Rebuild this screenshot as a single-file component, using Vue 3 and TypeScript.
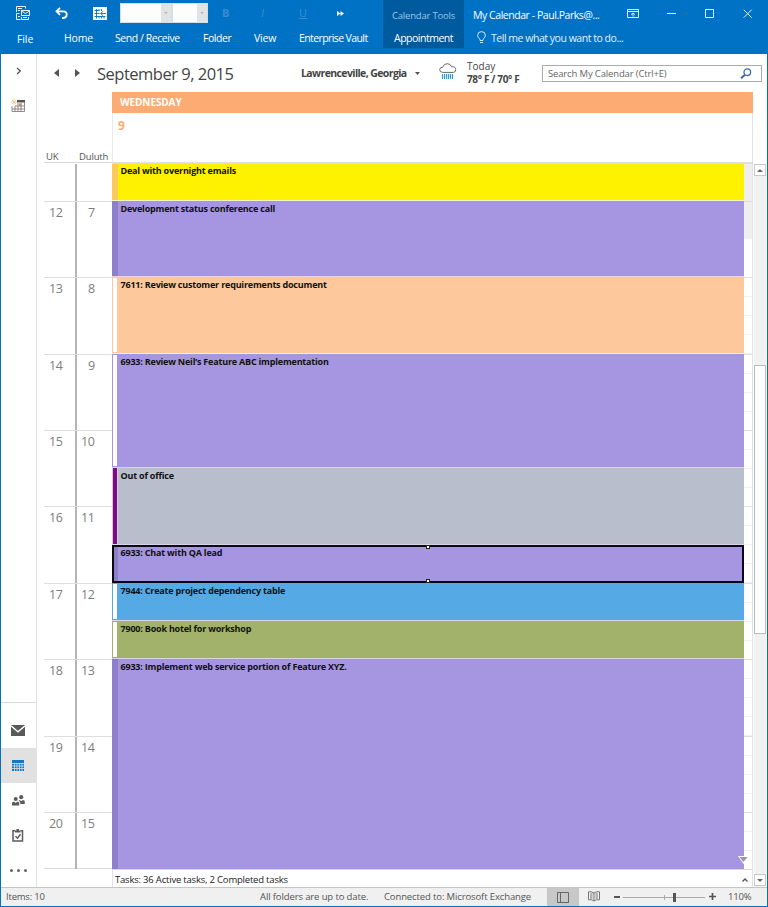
<script setup lang="ts">
interface CalendarEvent {
  title: string
  kind: string
  bar: 'busy' | 'free' | 'away'
  height: number
  selected?: boolean
}

interface HourRow {
  uk: string
  duluth: string
  height: number
}

const tabs = [
  { label: 'File', cls: 'file' },
  { label: 'Home', cls: 'home' },
  { label: 'Send / Receive', cls: 'send' },
  { label: 'Folder', cls: 'folder' },
  { label: 'View', cls: 'view' },
  { label: 'Enterprise Vault', cls: 'vault' },
]

const hours: HourRow[] = [
  { uk: '', duluth: '', height: 38 },
  { uk: '12', duluth: '7', height: 76 },
  { uk: '13', duluth: '8', height: 77 },
  { uk: '14', duluth: '9', height: 76 },
  { uk: '15', duluth: '10', height: 76 },
  { uk: '16', duluth: '11', height: 77 },
  { uk: '17', duluth: '12', height: 76 },
  { uk: '18', duluth: '13', height: 77 },
  { uk: '19', duluth: '14', height: 76 },
  { uk: '20', duluth: '15', height: 56 },
]

const events: CalendarEvent[] = [
  { title: 'Deal with overnight emails', kind: 'yellow', bar: 'busy', height: 37 },
  { title: 'Development status conference call', kind: 'purple', bar: 'busy', height: 76 },
  { title: '7611: Review customer requirements document', kind: 'orange', bar: 'free', height: 77 },
  { title: '6933: Review Neil’s Feature ABC implementation', kind: 'purple', bar: 'free', height: 114 },
  { title: 'Out of office', kind: 'gray', bar: 'away', height: 77 },
  { title: '6933: Chat with QA lead', kind: 'purple', bar: 'busy', height: 38, selected: true },
  { title: '7944: Create project dependency table', kind: 'blue', bar: 'free', height: 38 },
  { title: '7900: Book hotel for workshop', kind: 'olive', bar: 'free', height: 38 },
  { title: '6933: Implement web service portion of Feature XYZ.', kind: 'purple', bar: 'busy', height: 210 },
]
</script>

<template>
  <div class="window">
    <header class="ribbon">
      <div class="left">
        <div class="quick">
          <svg class="q1" width="16" height="16" viewBox="0 0 16 16" fill="none" stroke="#fff" stroke-width=".9">
            <path d="M1.500 7V1.500h9v2M3 3.500h4M3 5.500h2M6.500 5.500h8v5h-8zM6.500 6l4 2.500 4-2.500M1.500 8.500h3M1.500 8.500v6h4M3 11.500h2M6.500 12v2.500h7V12M8 12.500h4" />
          </svg>
          <svg class="q2" width="14" height="13" viewBox="0 0 14 13" fill="none" stroke="#fff" stroke-width="1.8">
            <path d="M5 .8 1.500 4.300 5 7.800M2 4.300h6q3.700 0 3.700 3.200T8.500 11H7" />
          </svg>
          <svg class="q3" width="14" height="13" viewBox="0 0 14 13">
            <path d="M0 0h14v13H0z" fill="#fff" />
            <path d="M1.500 3.500h5M1.500 6.500h5M1.500 9.500h11M3.500 2v9.500M6 2v2M8.500 2v2M6 9v2.500M8.500 9v2.500M11 9v2.500M7.500 6.500H13M10 4.200 7.700 6.500 10 8.800" fill="none" stroke="#0072c6" stroke-width=".9" />
          </svg>
          <span class="combo wide"><i><b></b></i></span>
          <span class="combo"><i><b></b></i></span>
          <span class="fmt fb">B</span>
          <span class="fmt fi">I</span>
          <span class="fmt fu">U</span>
          <svg class="more" width="7" height="5" viewBox="0 0 7 5" fill="#fff"><path d="M0 0l3.500 2.500L0 5zM3.500 0L7 2.500 3.500 5z" /></svg>
        </div>
        <nav class="tabs">
          <span v-for="tab in tabs" :key="tab.cls" class="tab" :class="tab.cls">{{ tab.label }}</span>
        </nav>
      </div>
      <div class="context">
        <span class="tools">Calendar Tools</span>
        <span class="appt">Appointment</span>
      </div>
      <div class="right">
        <div class="caption">
          <span class="wtitle">My Calendar - Paul.Parks@...</span>
          <svg class="w1" width="12" height="9" viewBox="0 0 12 9" fill="none" stroke="#e4f0fa">
            <path d="M.5.5h11v8H.5zM1 2.500h10M6 7.500V4M4 5.700l2-1.700 2 1.700" />
          </svg>
          <svg class="w2" width="10" height="10" viewBox="0 0 10 10" stroke="#e4f0fa"><path d="M0 5.500h9" /></svg>
          <svg class="w3" width="10" height="10" viewBox="0 0 10 10" fill="none" stroke="#e4f0fa"><path d="M.5.5h8v8h-8z" /></svg>
          <svg class="w4" width="10" height="10" viewBox="0 0 10 10" stroke="#e4f0fa"><path d="M.7.7l8 8M8.700.7l-8 8" /></svg>
        </div>
        <div class="tell">
          <svg width="9" height="13" viewBox="0 0 9 13" fill="none" stroke="#d4e7f6">
            <path d="M3 9.500V8.200Q.6 6.700.6 4.300.6.6 4.500.6t3.900 3.700Q8.400 6.700 6 8.200v1.300zM3 11.500h3" />
          </svg>
          <span>Tell me what you want to do...</span>
        </div>
      </div>
    </header>

    <div class="body">
      <aside class="rail">
        <svg class="expand" width="6" height="8" viewBox="0 0 6 8" fill="none" stroke="#555" stroke-width="1.3"><path d="M1 1l3.300 3L1 7" /></svg>
        <svg class="peek" width="14" height="14" viewBox="0 0 14 14">
          <path d="M6 1h8v2.500H6z" fill="#5d5350" />
          <path d="M1 7v5.500h12.500V3M1 10h12M4 7v5M7 4v8M10 4v8M4 7h9" fill="none" stroke="#77706c" stroke-width=".8" />
          <path d="M3 0v6M0 3h6M1 1l4 4M5 1L1 5" stroke="#e9c88b" stroke-width=".8" />
          <path d="M8 4.500h2.500V7H8z" fill="#c98a6e" />
        </svg>
        <div class="modules">
          <div class="mod">
            <svg width="14" height="11" viewBox="0 0 14 11"><path d="M0 0h14v11H0z" fill="#595959" /><path d="M0 .8l7 6 7-6" fill="none" stroke="#fff" stroke-width="1.300" /></svg>
          </div>
          <div class="mod active">
            <svg width="12" height="11" viewBox="0 0 12 11">
              <path d="M0 0h12v11H0z" fill="#1577c2" />
              <path d="M0 3.500h12M0 6h12M0 8.500h12M2.500 3v8M5 3v8M7.500 3v8M10 3v8" stroke="#e1e1e1" stroke-width=".8" />
            </svg>
          </div>
          <div class="mod">
            <svg width="13" height="11" viewBox="0 0 13 11" fill="#5b5b5b">
              <circle cx="3.700" cy="3.900" r="2" /><circle cx="9.200" cy="2.200" r="2.100" />
              <path d="M0 7.500l2-1 1.700 1.400 1.700-1.400 1.800 1V10.500H0zM6.500 5.800l1.200-.8 1.500 1.300L10.700 5l2 .8V9H8.200V7z" />
            </svg>
          </div>
          <div class="mod">
            <svg width="12" height="13" viewBox="0 0 12 13" fill="none" stroke="#5b5b5b" stroke-width="1.500">
              <path d="M3 1.800H1v10.200h9.500V1.800H8.500M3.500 7.200l2 2 3-4" /><path d="M3 2.500h5.500M4.500 1H7" stroke-width="2" />
            </svg>
          </div>
          <div class="mod dots"><i></i><i></i><i></i></div>
        </div>
      </aside>

      <main class="main">
        <div class="toolbar">
          <svg class="prev" width="5" height="8" viewBox="0 0 5 8" fill="#555"><path d="M5 0v8L0 4z" /></svg>
          <svg class="next" width="5" height="8" viewBox="0 0 5 8" fill="#555"><path d="M0 0v8l5-4z" /></svg>
          <h1>September 9, 2015</h1>
          <span class="place">Lawrenceville, Georgia</span>
          <svg class="drop" width="5" height="3" viewBox="0 0 5 3" fill="#555"><path d="M0 0h5L2.500 3z" /></svg>
          <svg class="weather" width="18" height="17" viewBox="0 0 18 17" fill="none">
            <path d="M3.700 9.400Q.7 9.200.7 6.700q0-2.400 3-2.500Q4.800.7 8.300.7q3.200 0 4.200 3 4.200-.3 4.200 3 0 2.500-2.200 2.700z" stroke="#666" />
            <path d="M3.500 11v5M5.500 11v5M7.500 11v5M9.500 11v5M11.500 11v5M13.500 11v5" stroke="#28a3dc" stroke-width="1.200" />
          </svg>
          <div class="forecast"><span class="today">Today</span><span class="temp">78° F / 70° F</span></div>
          <div class="search">
            <span>Search My Calendar (Ctrl+E)</span>
            <svg width="12" height="11" viewBox="0 0 12 11" fill="none" stroke="#3d68b0"><circle cx="7.300" cy="4.200" r="3.300" stroke-width="1.300" /><path d="M5 6.700L1 10.200" stroke-width="2" /></svg>
          </div>
        </div>

        <div class="sheet">
          <div class="heads">
            <div class="zones"><span class="uk">UK</span><span class="dul">Duluth</span></div>
            <div class="day">
              <div class="dayname">WEDNESDAY</div>
              <div class="allday">9</div>
            </div>
          </div>
          <div class="grid">
            <div class="hours">
              <div v-for="(row, i) in hours" :key="i" class="hour" :style="{ height: row.height + 'px' }">
                <span class="h1">{{ row.uk }}</span><span class="h2">{{ row.duluth }}</span>
              </div>
            </div>
            <div class="events">
              <div
                v-for="(event, i) in events"
                :key="i"
                class="event"
                :class="[event.kind, { selected: event.selected }]"
                :style="{ height: event.height + 'px' }"
              >
                <i class="bar" :class="event.bar"></i>
                <span>{{ event.title }}</span>
                <template v-if="event.selected"><b class="grip top"></b><b class="grip bottom"></b></template>
              </div>
            </div>
            <div class="slots">
              <div v-for="(row, i) in hours" :key="i" class="slot" :class="{ off: i === 0, half: i === 1 }" :style="{ height: row.height + 'px' }"></div>
              <svg class="below" width="11" height="8" viewBox="0 0 11 8"><path d="M0 0h11L5.500 8z" fill="#fff" /><path d="M1.500 1h8L5.500 6z" fill="#9a9a9a" /></svg>
            </div>
            <div class="scroll">
              <div class="sbtn"><i class="up"></i></div>
              <div class="thumb"></div>
              <div class="sbtn end"><i class="down"></i></div>
            </div>
          </div>
          <div class="tasks">
            <span>Tasks: 36 Active tasks, 2 Completed tasks</span>
            <svg width="6" height="4" viewBox="0 0 6 4" fill="none" stroke="#555" stroke-width="1.400"><path d="M.5 3.500L3 1l2.500 2.500" /></svg>
          </div>
        </div>
      </main>
    </div>

    <footer class="status">
      <span class="items">Items: 10</span>
      <span class="sync">All folders are up to date.</span>
      <span class="conn">Connected to: Microsoft Exchange</span>
      <span class="viewbtn"><svg width="12" height="11" viewBox="0 0 12 11" fill="none" stroke="#666"><path d="M.5.5h11v10H.5zM3.500.5v10" /></svg></span>
      <svg class="book" width="12" height="11" viewBox="0 0 12 11" fill="none" stroke="#777"><path d="M6 2Q3 0 .5.800v8Q3.500 8 6 10 8.500 8 11.500 8.800v-8Q9 0 6 2v8M2 3h2.500M2 5h2.500M2 7h2.500M7.500 3H10M7.500 5H10M7.500 7H10" /></svg>
      <i class="minus"></i>
      <span class="slider"><i class="mid"></i><i class="knob"></i></span>
      <svg class="plus" width="7" height="7" viewBox="0 0 7 7" stroke="#555" stroke-width="1.700"><path d="M0 3.500h7M3.500 0v7" /></svg>
      <span class="zoom">110%</span>
    </footer>
  </div>
</template>

<style>
body { background: #fff; }
</style>

<style scoped>
* { box-sizing: border-box; }
.window {
  width: 768px; height: 907px; overflow: hidden; display: flex; flex-direction: column;
  font-family: "Open Sans", "Noto Sans", sans-serif; font-size: 10px; color: #444; white-space: nowrap;
  border: 1px solid #0072c6; border-top: 0; background: #fff;
}
svg { display: block; flex: none; }
i, b { display: block; }
.ribbon { height: 54px; flex: none; display: flex; background: #0072c6; color: #fff; }
.left { width: 382px; }
.quick { height: 28px; display: flex; align-items: flex-start; }
.q1 { margin: 5px 0 0 14px; }
.q2 { margin: 7px 0 0 24px; }
.q3 { margin: 7px 0 0 24px; }
.combo { width: 36px; height: 20px; margin: 3px 0 0 0; background: #fdfdfd; border: 1px solid #d5dde5; display: flex; justify-content: flex-end; flex: none; }
.combo.wide { width: 52px; margin-left: 13px; }
.combo i { width: 10px; background: #e3e3e3; }
.combo b { margin: 8px auto 0; width: 4px; border: 2px solid transparent; border-top-color: #b5b5b5; }
.fmt { font-size: 11px; line-height: 14px; margin-top: 6px; color: #3a8dd2; }
.fb { margin-left: 14px; font-weight: 700; width: 39px; }
.fi { font-style: italic; width: 38px; }
.fu { text-decoration: underline; width: 37px; }
.more { margin: 11px 0 0 1px; }
.tabs { display: flex; }
.tab { font-size: 10.500px; line-height: 16px; margin-top: 2px; letter-spacing: -.2px; }
.tab.file { box-sizing: content-box; width: 47px; padding-left: 16px; margin-top: 3px; letter-spacing: -.1px; }
.home { width: 51px; }
.send { width: 88px; }
.tab.send { letter-spacing: -.45px; }
.folder { width: 51px; }
.tab.folder { letter-spacing: -.45px; }
.view { width: 45px; }
.tab.vault { letter-spacing: -.6px; }
.context { width: 81px; height: 48px; background: #005a9e; display: flex; flex-direction: column; align-items: center; }
.tools { font-size: 9.500px; line-height: 16px; margin-top: 8px; color: #9dc6e8; letter-spacing: -.2px; }
.appt { font-size: 10.500px; line-height: 16px; margin-top: 6px; letter-spacing: -.5px; }
.right { flex: 1; }
.caption { height: 28px; display: flex; }
.wtitle { font-size: 10.500px; line-height: 16px; margin: 7px 0 0 9px; width: 155px; letter-spacing: -.45px; }
.w1 { margin: 9px 0 0 -1px; }
.w2 { margin: 8px 0 0 28px; }
.w3 { margin: 9px 0 0 28px; }
.w4 { margin: 9px 0 0 28px; }
.tell { display: flex; font-size: 10.500px; line-height: 16px; margin-left: 13px; gap: 5px; color: #e4f0fa; letter-spacing: -.47px; }
.tell svg { margin-top: 3px; }
.tell span { margin-top: 2px; }

.body { flex: 1; display: flex; min-height: 0; }
.rail { width: 36px; border-right: 1px solid #e1e1e1; display: flex; flex-direction: column; }
.expand { margin: 13px 0 0 15px; }
.peek { margin: 24px 0 0 10px; }
.modules { margin-top: auto; height: 185px; border-top: 1px solid #d9d9d9; padding-top: 10px; }
.mod { height: 35px; display: flex; align-items: center; justify-content: center; padding-right: 1px; }
.mod.active { background: #e1e1e1; }
.dots { gap: 4px; }
.dots i { width: 3px; height: 3px; border-radius: 50%; background: #666; }

.main { flex: 1; display: flex; flex-direction: column; }
.toolbar { height: 38px; display: flex; }
.prev { margin: 15px 0 0 17px; }
.next { margin: 15px 0 0 16px; }
h1 { font-size: 16.500px; line-height: 24px; font-weight: 400; margin: 8px 0 0 17px; width: 204px; letter-spacing: -.5px; }
.place { font-size: 10.500px; font-weight: 700; line-height: 16px; margin-top: 11px; width: 114px; letter-spacing: -.6px; }
.drop { margin-top: 18px; }
.weather { margin: 9px 0 0 19px; }
.forecast { display: flex; flex-direction: column; margin: 6px 0 0 10px; width: 75px; line-height: 13px; font-size: 10px; }
.temp { font-weight: 700; letter-spacing: -.35px; }
.search { width: 220px; height: 17px; margin-top: 11px; border: 1px solid #ababab; display: flex; justify-content: space-between; padding: 0 9px 0 5px; font-size: 9.500px; line-height: 16px; color: #666; letter-spacing: -.15px; }
.search svg { margin-top: 2px; }

.sheet { flex: 1; display: flex; flex-direction: column; padding-left: 7px; }
.heads { height: 72px; display: flex; flex: none; }
.zones { width: 68px; display: flex; align-items: flex-end; font-size: 9.500px; line-height: 11px; color: #555; border-bottom: 1px solid #d8d8d8; margin-bottom: 1px; letter-spacing: -.15px; }
.uk { width: 33px; padding-left: 2px; }
.dul { padding-left: 2px; }
.day { width: 641px; border: 1px solid #e1e1e1; border-top: 0; border-bottom: 2px solid #dedede; border-left-color: #eaeaea; }
.dayname { height: 21px; margin: 0 -1px; background: #fcab73; color: #fff; font-size: 10px; font-weight: 700; line-height: 21px; padding-left: 8px; letter-spacing: -.1px; }
.allday { color: #fcab73; font-weight: 700; font-size: 12px; line-height: 16px; padding: 5px 0 0 5px; }
.grid { height: 705px; display: flex; flex: none; }
.hours { width: 68px; border-bottom: 1px solid #d8d8d8; }
.hour { display: flex; border-bottom: 1px solid #dedede; font-size: 12.500px; line-height: 18px; color: #7d7d7d; letter-spacing: -.3px; }
.hour:last-child { border-bottom: 0; }
.h1 { width: 33px; border-right: 2px solid #b5b5b5; padding: 2px 0 0 5px; }
.h2 { padding: 2px 0 0 4px; }
.hour:nth-child(-n+4) .h2 { padding-left: 11px; }
.events { width: 632px; }
.event { position: relative; display: flex; border-bottom: 1px solid #d9d4e6; font-size: 9px; font-weight: 700; line-height: 12px; color: #111; }
.event:first-child { border-bottom-color: #f6f3d0; }
.event:nth-child(2) { border-bottom-color: #e4d5e0; }
.event:nth-child(3) { border-bottom-color: #fff0e6; }
.event:last-child { border-bottom: 0; }
.event span { padding: 2px 0 0 2.500px; letter-spacing: -.2px; }
.event:first-child span { padding-top: 1px; }
.bar { width: 6px; flex: none; }
.yellow { background: #fff200; }
.yellow .bar { background: #fcc95a; }
.purple { background: #a695e0; }
.purple .busy { background: #8d7fcc; }
.orange { background: #fdc89b; }
.gray { background: #b8becb; }
.blue { background: #55aae6; }
.olive { background: #a2b26a; }
.bar.free { background: #fff; border: 1px solid #a695e0; }
.orange .free { border-color: #fdc89b; }
.blue .free { border-color: #55aae6; }
.olive .free { border-color: #a2b26a; }
.bar.away { background: #7a0c84; border-left: 1px solid #d8c7de; border-right: 1px solid #d8c7de; }
.event.selected { border: 2px solid #0b0818; }
.selected .bar { width: 4px; }
.event.selected span { padding-top: 0; }
.grip { position: absolute; left: 312px; width: 4px; height: 4px; background: #fff; border: 1px solid #222; }
.grip.top { top: -2px; }
.grip.bottom { bottom: -2px; }
.slots { width: 9px; position: relative; border-right: 1px solid #e1e1e1; border-bottom: 1px solid #d8d8d8; }
.slot { border-bottom: 1px solid #dedede; background: repeating-linear-gradient(#fff 0 18px, #f1f1f1 18px 19px); }
.slot.off { background: #efefef; }
.slot.half { background: linear-gradient(#efefef 50%, #fff 50%); }
.slot:nth-last-child(2) { border-bottom: 0; }
.below { position: absolute; right: 3px; bottom: 4px; }
.scroll { width: 12px; margin-left: 1px; background: #f1f1f1; display: flex; flex-direction: column; height: 723px; }
.sbtn { height: 12px; border: 1px solid #c9c9c9; background: #fff; display: flex; align-items: center; justify-content: center; }
.up { border: 3px solid transparent; border-top: 0; border-bottom-color: #666; }
.down { border: 3px solid transparent; border-bottom: 0; border-top-color: #666; }
.thumb { margin-top: 189px; height: 269px; background: #fff; border: 1px solid #bbb; }
.sbtn.end { margin-top: auto; margin-bottom: 1px; }
.tasks { width: 641px; margin-left: 68px; height: 18px; border: 1px solid #e1e1e1; border-top-color: #d8d8d8; border-bottom: 0; display: flex; justify-content: space-between; padding: 0 4px 0 2px; font-size: 9.500px; line-height: 19px; color: #222; letter-spacing: -.2px; }
.tasks svg { margin-top: 8px; }

.status { height: 19px; flex: none; display: flex; border-top: 1px solid #c6c6c6; background: #f0f0f0; font-size: 9.500px; line-height: 18px; color: #555; letter-spacing: -.12px; }
.items { width: 259px; padding-left: 5px; letter-spacing: -.2px; }
.sync { width: 124px; }
.conn { width: 163px; }
.viewbtn { width: 32px; background: #c8c8c8; display: flex; align-items: center; justify-content: center; }
.book { margin: 3px 0 0 9px; }
.minus { width: 6px; height: 2px; background: #555; margin: 8px 0 0 14px; }
.slider { position: relative; width: 82px; height: 1px; margin: 9px 0 0 3px; background: #aaa; }
.mid { position: absolute; left: 41px; top: -2px; width: 1px; height: 5px; background: #aaa; }
.knob { position: absolute; left: 50px; top: -4px; width: 3px; height: 9px; background: #555; }
.plus { margin: 5px 0 0 4px; }
.zoom { margin-left: 12px; letter-spacing: -.2px; }
</style>
